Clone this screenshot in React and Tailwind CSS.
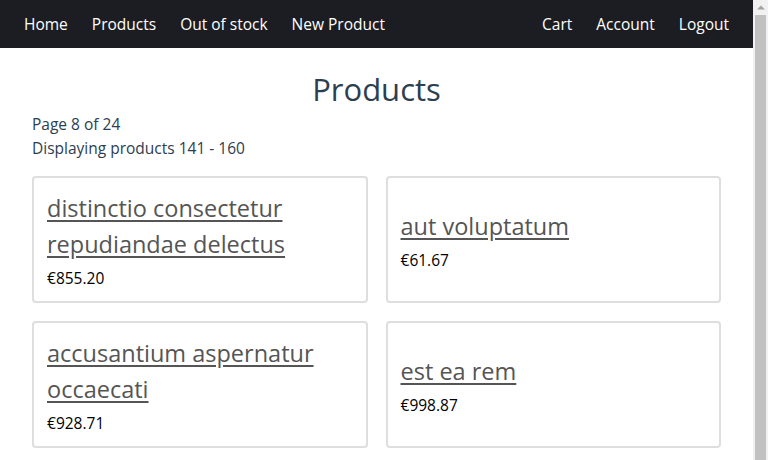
import React from 'react'

const products = [
  { id: 141, name: 'distinctio consectetur repudiandae delectus', price: '855.20' },
  { id: 142, name: 'aut voluptatum', price: '61.67' },
  { id: 143, name: 'accusantium aspernatur occaecati', price: '928.71' },
  { id: 144, name: 'est ea rem', price: '998.87' },
]

const NavLink = ({ children }) => (
  <a href="#" className="px-3 text-[15.5px] text-white">
    {children}
  </a>
)

// fake classic scrollbar on the right edge, as in the screenshot
const Scrollbar = () => (
  <div className="flex h-[460px] w-[15px] shrink-0 flex-col items-center bg-[#f1f1f1]">
    <svg width="14" height="15" viewBox="0 0 14 15" className="shrink-0">
      <path d="M3 9.5 L7 5.5 L11 9.5 Z" fill="#a3a3a3" />
    </svg>
    <div className="h-[460px] w-[11px] bg-[#c1c1c1]" />
  </div>
)

const App = () => {
  return (
    <div className="flex h-[460px] overflow-hidden bg-white text-[#2c3e50]" style={{ fontFamily: '"Open Sans", sans-serif' }}>
      <div className="min-w-0 flex-1">
        <nav className="flex h-12 items-center justify-between bg-[#1c1d22] px-3 pt-[2px]">
          <div className="flex">
            <NavLink>Home</NavLink>
            <NavLink>Products</NavLink>
            <NavLink>Out of stock</NavLink>
            <NavLink>New Product</NavLink>
          </div>
          <div className="flex">
            <NavLink>Cart</NavLink>
            <NavLink>Account</NavLink>
            <NavLink>Logout</NavLink>
          </div>
        </nav>

        <main className="px-8 pb-6 pt-[19px]">
          <h1 className="text-center text-[31px] leading-[44px]">Products</h1>
          <p className="mt-[1px] text-[15.5px] leading-6">Page 8 of 24</p>
          <p className="text-[15.5px] leading-6">Displaying products 141 - 160</p>

          <div className="mt-[16px] grid grid-cols-2 gap-[18px]">
            {products.map((p) => (
              <div
                key={p.id}
                className="flex min-h-[127px] flex-col justify-center rounded border-2 border-[#dedede] px-[13px] pb-[10px] pt-[10px]"
              >
                <a href="#" className="text-[23.5px] leading-9 text-[#555] underline underline-offset-[3px]">
                  {p.name}
                </a>
                <p className="mt-[4px] text-[15.5px] leading-6 text-black">€{p.price}</p>
              </div>
            ))}
          </div>
        </main>
      </div>
      <Scrollbar />
    </div>
  )
}

export default App
